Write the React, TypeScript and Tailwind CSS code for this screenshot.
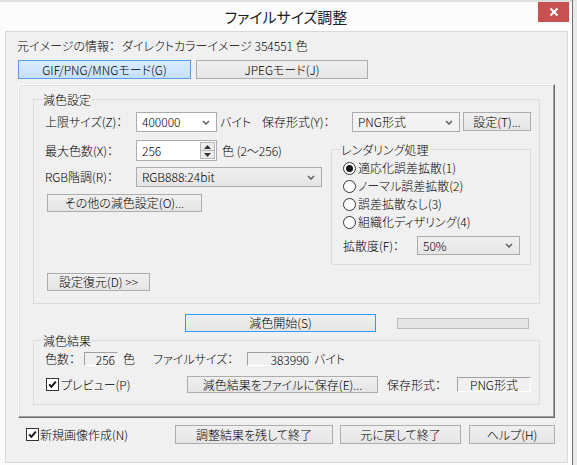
import type { ReactNode } from 'react';

// 下向きのシェブロン（コンボボックス用）
function Chevron() {
  return (
    <svg width="8" height="5" viewBox="0 0 8 5">
      <path d="M1 1 L4 4 L7 1" stroke="#606060" strokeWidth="1.5" fill="none" />
    </svg>
  );
}

function Check() {
  return (
    <span className="w-[13px] h-[13px] border border-[#333333] bg-white flex items-center justify-center shrink-0">
      <svg width="9" height="9" viewBox="0 0 9 9">
        <path d="M1.2 4.4 L3.4 6.9 L7.8 1.6" stroke="#111111" strokeWidth="1.9" fill="none" />
      </svg>
    </span>
  );
}

function Radio({ on }: { on?: boolean }) {
  return (
    <span className="w-[13px] h-[13px] rounded-full border border-[#333333] bg-white flex items-center justify-center shrink-0">
      {on && <span className="w-[7px] h-[7px] rounded-full bg-[#1a1a1a]" />}
    </span>
  );
}

function Button({ className, children }: { className: string; children: ReactNode }) {
  return (
    <div
      className={`flex items-center justify-center border border-[#adadad] bg-gradient-to-b from-[#f0f0f0] to-[#e5e5e5] leading-[14px] shrink-0 ${className}`}
    >
      {children}
    </div>
  );
}

function Combo({ className, value }: { className: string; value: string }) {
  return (
    <div className={`flex items-center justify-between border border-[#acacac] pl-[5px] pr-[6px] shrink-0 ${className}`}>
      <span className="leading-[14px]">{value}</span>
      <Chevron />
    </div>
  );
}

function Field({ className, children }: { className: string; children: ReactNode }) {
  return (
    <div
      className={`flex items-center border-t border-l border-t-[#a0a0a0] border-l-[#a0a0a0] border-r border-b border-r-white border-b-white leading-[13px] shrink-0 ${className}`}
    >
      {children}
    </div>
  );
}

function Legend({ children }: { children: ReactNode }) {
  return (
    <div className="-mt-[7px] ml-[8px] px-[1px] bg-[#f0f0f0] w-fit h-[13px] leading-[13px]">{children}</div>
  );
}

export default function App() {
  return (
    <div className="w-[577px] h-[465px] flex overflow-hidden bg-white text-[12px] font-light text-black font-['Noto_Sans_CJK_JP',sans-serif] [font-feature-settings:'palt']">
      <div className="w-[572px] h-full flex flex-col bg-[#fcfcfc] border-t-2 border-t-[#dedede]">
        {/* タイトルバー */}
        <div className="h-[29px] flex items-start shrink-0">
          <div className="w-[34px]" />
          <div className="flex-1 text-center pt-[5px] text-[15px] font-normal leading-[20px] text-[#1e1e1e]">ファイルサイズ調整</div>
          <div className="w-[31px] h-[20px] mr-[3px] bg-[#c75050] flex items-center justify-center">
            <svg width="10" height="10" viewBox="0 0 10 10">
              <path d="M1.5 1.5 L8.5 8.5 M8.5 1.5 L1.5 8.5" stroke="#ffffff" strokeWidth="2" />
            </svg>
          </div>
        </div>

        {/* クライアント領域 */}
        <div className="ml-[5px] mr-[4px] h-[432px] border border-[#d9d9d9] bg-[#f0f0f0] flex flex-col shrink-0">
          <div className="mt-[4px] h-[20px] pl-[11px] flex items-center leading-[14px]">
            <span className="w-[105px]">元イメージの情報：</span>
            <span>ダイレクトカラーイメージ 354551 色</span>
          </div>

          <div className="mt-[4px] h-[19px] ml-[12px] flex">
            <div className="w-[173px] h-[19px] border border-[#569de5] bg-gradient-to-b from-[#daecfc] to-[#c4e0fc] flex items-center justify-center leading-[14px]">
              GIF/PNG/MNGモード(G)
            </div>
            <Button className="ml-[5px] w-[172px] h-[19px]">JPEGモード(J)</Button>
          </div>

          {/* タブパネル */}
          <div className="mt-[5px] ml-[12px] w-[537px] h-[334px] border border-t-white border-l-white border-r-[#6b6b6b] border-b-[#6b6b6b] shadow-[inset_-1px_-1px_0_#a0a0a0,inset_1px_1px_0_#e3e3e3] flex flex-col">
            {/* 減色設定 */}
            <div className="ml-[14px] mt-[14px] w-[507px] h-[205px] border border-[#dcdcdc] flex flex-col shrink-0">
              <Legend>減色設定</Legend>
              <div className="mt-[6px] h-[20px] pl-[11px] flex items-center leading-[14px]">
                <span className="w-[91px]">上限サイズ(Z)：</span>
                <Combo className="w-[81px] h-[20px] bg-white" value="400000" />
                <span className="ml-[3px] w-[42px]">バイト</span>
                <span className="w-[90px]">保存形式(Y)：</span>
                <Combo className="w-[108px] h-[20px] bg-[#f3f3f3]" value="PNG形式" />
                <Button className="ml-[3px] w-[68px] h-[19px] -mt-[1px]">設定(T)...</Button>
              </div>

              <div className="mt-[8px] flex items-start">
                <div className="pl-[11px] w-[297px] flex flex-col">
                  <div className="h-[21px] flex items-center leading-[14px]">
                    <span className="w-[91px]">最大色数(X)：</span>
                    <div className="w-[81px] h-[21px] border border-[#acacac] bg-white flex items-center justify-between pl-[5px] pr-[1px]">
                      <span>256</span>
                      <div className="w-[15px] h-[17px] border border-[#b5b5b5] bg-[#ececec] flex flex-col">
                        <div className="flex-1 flex items-center justify-center border-b border-[#b5b5b5]">
                          <svg width="7" height="4" viewBox="0 0 7 4">
                            <path d="M0 4 L3.5 0 L7 4 Z" fill="#333333" />
                          </svg>
                        </div>
                        <div className="flex-1 flex items-center justify-center">
                          <svg width="7" height="4" viewBox="0 0 7 4">
                            <path d="M0 0 L3.5 4 L7 0 Z" fill="#333333" />
                          </svg>
                        </div>
                      </div>
                    </div>
                    <span className="ml-[5px]">色 (2〜256)</span>
                  </div>
                  <div className="mt-[6px] h-[20px] flex items-center leading-[14px]">
                    <span className="w-[91px]">RGB階調(R)：</span>
                    <Combo className="w-[186px] h-[20px] bg-gradient-to-b from-[#f0f0f0] to-[#e5e5e5]" value="RGB888:24bit" />
                  </div>
                  <Button className="mt-[7px] ml-[2px] w-[155px] h-[18px]">その他の減色設定(O)...</Button>
                  <Button className="mt-[61px] ml-[2px] w-[103px] h-[18px]">設定復元(D) &gt;&gt;</Button>
                </div>

                {/* レンダリング処理 */}
                <div className="mt-[9px] w-[200px] h-[116px] border border-[#dcdcdc] flex flex-col">
                  <Legend>レンダリング処理</Legend>
                  <div className="mt-[3px] pl-[11px] flex flex-col leading-[14px]">
                    {[
                      ['適応化誤差拡散(1)', true],
                      ['ノーマル誤差拡散(2)', false],
                      ['誤差拡散なし(3)', false],
                      ['組織化ディザリング(4)', false],
                    ].map(([label, on]) => (
                      <div key={label as string} className="h-[18px] flex items-center">
                        <Radio on={on as boolean} />
                        <span className="ml-[2px]">{label as string}</span>
                      </div>
                    ))}
                    <div className="mt-[5px] h-[19px] flex items-center">
                      <span className="w-[74px]">拡散度(F)：</span>
                      <Combo className="w-[103px] h-[19px] bg-gradient-to-b from-[#f0f0f0] to-[#e5e5e5]" value="50%" />
                    </div>
                  </div>
                </div>
              </div>
            </div>

            {/* 減色開始 */}
            <div className="mt-[10px] h-[18px] ml-[166px] flex items-center shrink-0">
              <div className="w-[191px] h-[18px] border border-[#3399ff] bg-gradient-to-b from-[#f0f0f0] to-[#e5e5e5] flex items-center justify-center leading-[14px]">
                減色開始(S)
              </div>
              <div className="ml-[21px] w-[132px] h-[11px] border border-[#bcbcbc] bg-[#e6e6e6]" />
            </div>

            {/* 減色結果 */}
            <div className="ml-[14px] mt-[8px] w-[507px] h-[65px] border border-[#dcdcdc] flex flex-col shrink-0">
              <Legend>減色結果</Legend>
              <div className="mt-[5px] h-[14px] pl-[11px] flex items-center leading-[14px]">
                <span className="w-[39px]">色数：</span>
                <Field className="w-[34px] h-[14px] justify-end pr-[2px]">256</Field>
                <span className="ml-[5px] w-[30px]">色</span>
                <span className="w-[94px]">ファイルサイズ：</span>
                <Field className="w-[65px] h-[14px] justify-end pr-[2px]">383990</Field>
                <span className="ml-[2px]">バイト</span>
              </div>
              <div className="mt-[10px] h-[17px] pl-[12px] flex items-center leading-[14px]">
                <div className="w-[141px] flex items-center">
                  <Check />
                  <span className="ml-[2px]">プレビュー(P)</span>
                </div>
                <Button className="w-[191px] h-[17px]">減色結果をファイルに保存(E)...</Button>
                <span className="ml-[9px] w-[70px]">保存形式：</span>
                <Field className="w-[74px] h-[15px] justify-center">PNG形式</Field>
              </div>
            </div>
          </div>

          {/* 下部ボタン */}
          <div className="mt-[7px] h-[19px] flex items-center leading-[14px]">
            <div className="ml-[20px] w-[149px] flex items-center">
              <Check />
              <span className="ml-[1px]">新規画像作成(N)</span>
            </div>
            <Button className="w-[158px] h-[19px]">調整結果を残して終了</Button>
            <Button className="ml-[7px] w-[121px] h-[19px]">元に戻して終了</Button>
            <Button className="ml-[8px] w-[86px] h-[19px]">ヘルプ(H)</Button>
          </div>
        </div>
      </div>
      <div className="w-[5px] h-full bg-[#e9e9e9] border-l border-[#6f6f6f]" />
    </div>
  );
}
